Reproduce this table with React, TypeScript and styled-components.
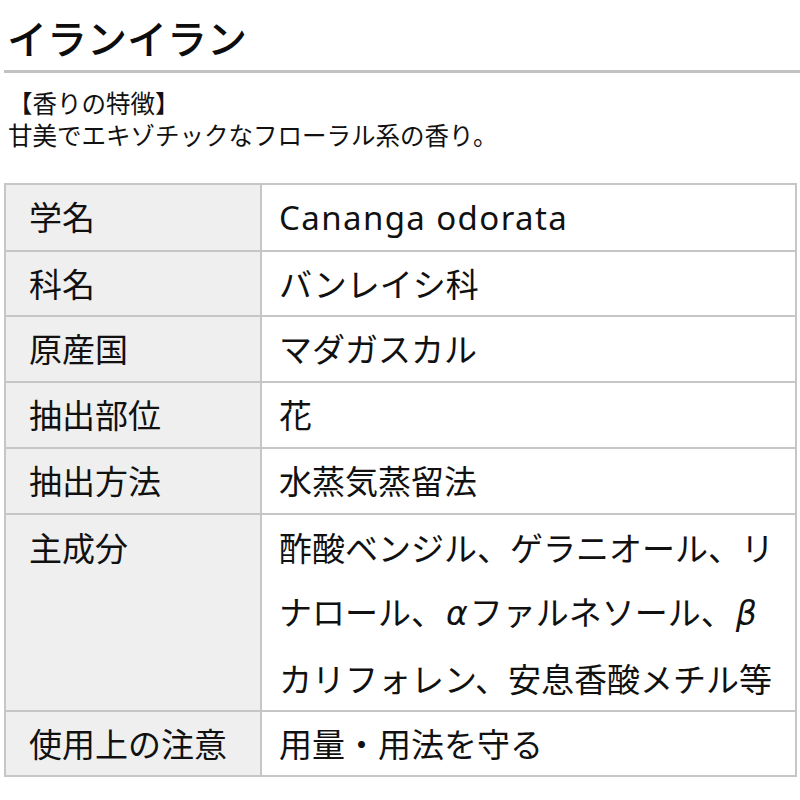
import React from "react";
import styled, { createGlobalStyle } from "styled-components";

const GlobalStyle = createGlobalStyle`
  html, body {
    margin: 0;
    padding: 0;
    background: #ffffff;
  }
  body {
    font-family: "Noto Sans CJK JP", "Noto Sans", sans-serif;
    color: #111111;
  }
`;

const Page = styled.div`
  width: 800px;
  box-sizing: border-box;
  padding: 13px 0 0 4px;
`;

const Title = styled.h1`
  margin: 0;
  padding-left: 3px;
  font-size: 40px;
  line-height: 48px;
  font-weight: 500;
  color: #0d0d0d;
`;

const Rule = styled.div`
  margin-top: 9px;
  height: 3px;
  background: #c2c2c2;
`;

const Intro = styled.div`
  margin-top: 14px;
  padding-left: 4px;
  font-size: 24.5px;
  line-height: 32px;
`;

const IntroLine = styled.p`
  margin: 0;
`;

const TableWrap = styled.div`
  margin-top: 32px;
  padding-right: 3px;
`;

const Table = styled.table`
  width: 100%;
  border-collapse: collapse;
  table-layout: fixed;
`;

const LabelCell = styled.th<{ $lines?: number }>`
  width: 256px;
  box-sizing: border-box;
  border: 2px solid #c6c6c6;
  background: #efefef;
  padding: 0 0 0 23px;
  font-size: 33px;
  line-height: ${(p) => (p.$lines && p.$lines > 1 ? 64 : 63.7)}px;
  font-weight: 400;
  text-align: left;
  vertical-align: top;
  white-space: nowrap;
`;

const ValueCell = styled.td<{ $lines?: number }>`
  border: 2px solid #c6c6c6;
  background: #ffffff;
  padding: 0 0 0 17px;
  font-size: 33px;
  line-height: ${(p) => (p.$lines && p.$lines > 1 ? 64 : 63.7)}px;
  text-align: left;
  vertical-align: top;
  white-space: nowrap;
`;

const Latin = styled.span`
  font-family: "Noto Sans", sans-serif;
  letter-spacing: 1.4px;
`;

const Greek = styled.span`
  font-family: "DejaVu Sans", sans-serif;
  font-style: italic;
  padding: 0 2px;
`;

type Row = { label: string; value: React.ReactNode; lines?: number };

const rows: Row[] = [
  { label: "学名", value: <Latin>Cananga odorata</Latin> },
  { label: "科名", value: "バンレイシ科" },
  { label: "原産国", value: "マダガスカル" },
  { label: "抽出部位", value: "花" },
  { label: "抽出方法", value: "水蒸気蒸留法" },
  {
    label: "主成分",
    lines: 3,
    value: (
      <>
        酢酸ベンジル、ゲラニオール、リ
        <br />
        ナロール、<Greek>α</Greek>ファルネソール、<Greek>β</Greek>
        <br />
        カリフォレン、安息香酸メチル等
      </>
    ),
  },
  { label: "使用上の注意", value: "用量・用法を守る" },
];

export default function App() {
  return (
    <>
      <GlobalStyle />
      <Page>
        <Title>イランイラン</Title>
        <Rule />
        <Intro>
          <IntroLine>【香りの特徴】</IntroLine>
          <IntroLine>甘美でエキゾチックなフローラル系の香り。</IntroLine>
        </Intro>
        <TableWrap>
          <Table>
            <tbody>
              {rows.map((r) => (
                <tr key={r.label}>
                  <LabelCell scope="row" $lines={r.lines}>
                    {r.label}
                  </LabelCell>
                  <ValueCell $lines={r.lines}>{r.value}</ValueCell>
                </tr>
              ))}
            </tbody>
          </Table>
        </TableWrap>
      </Page>
    </>
  );
}
